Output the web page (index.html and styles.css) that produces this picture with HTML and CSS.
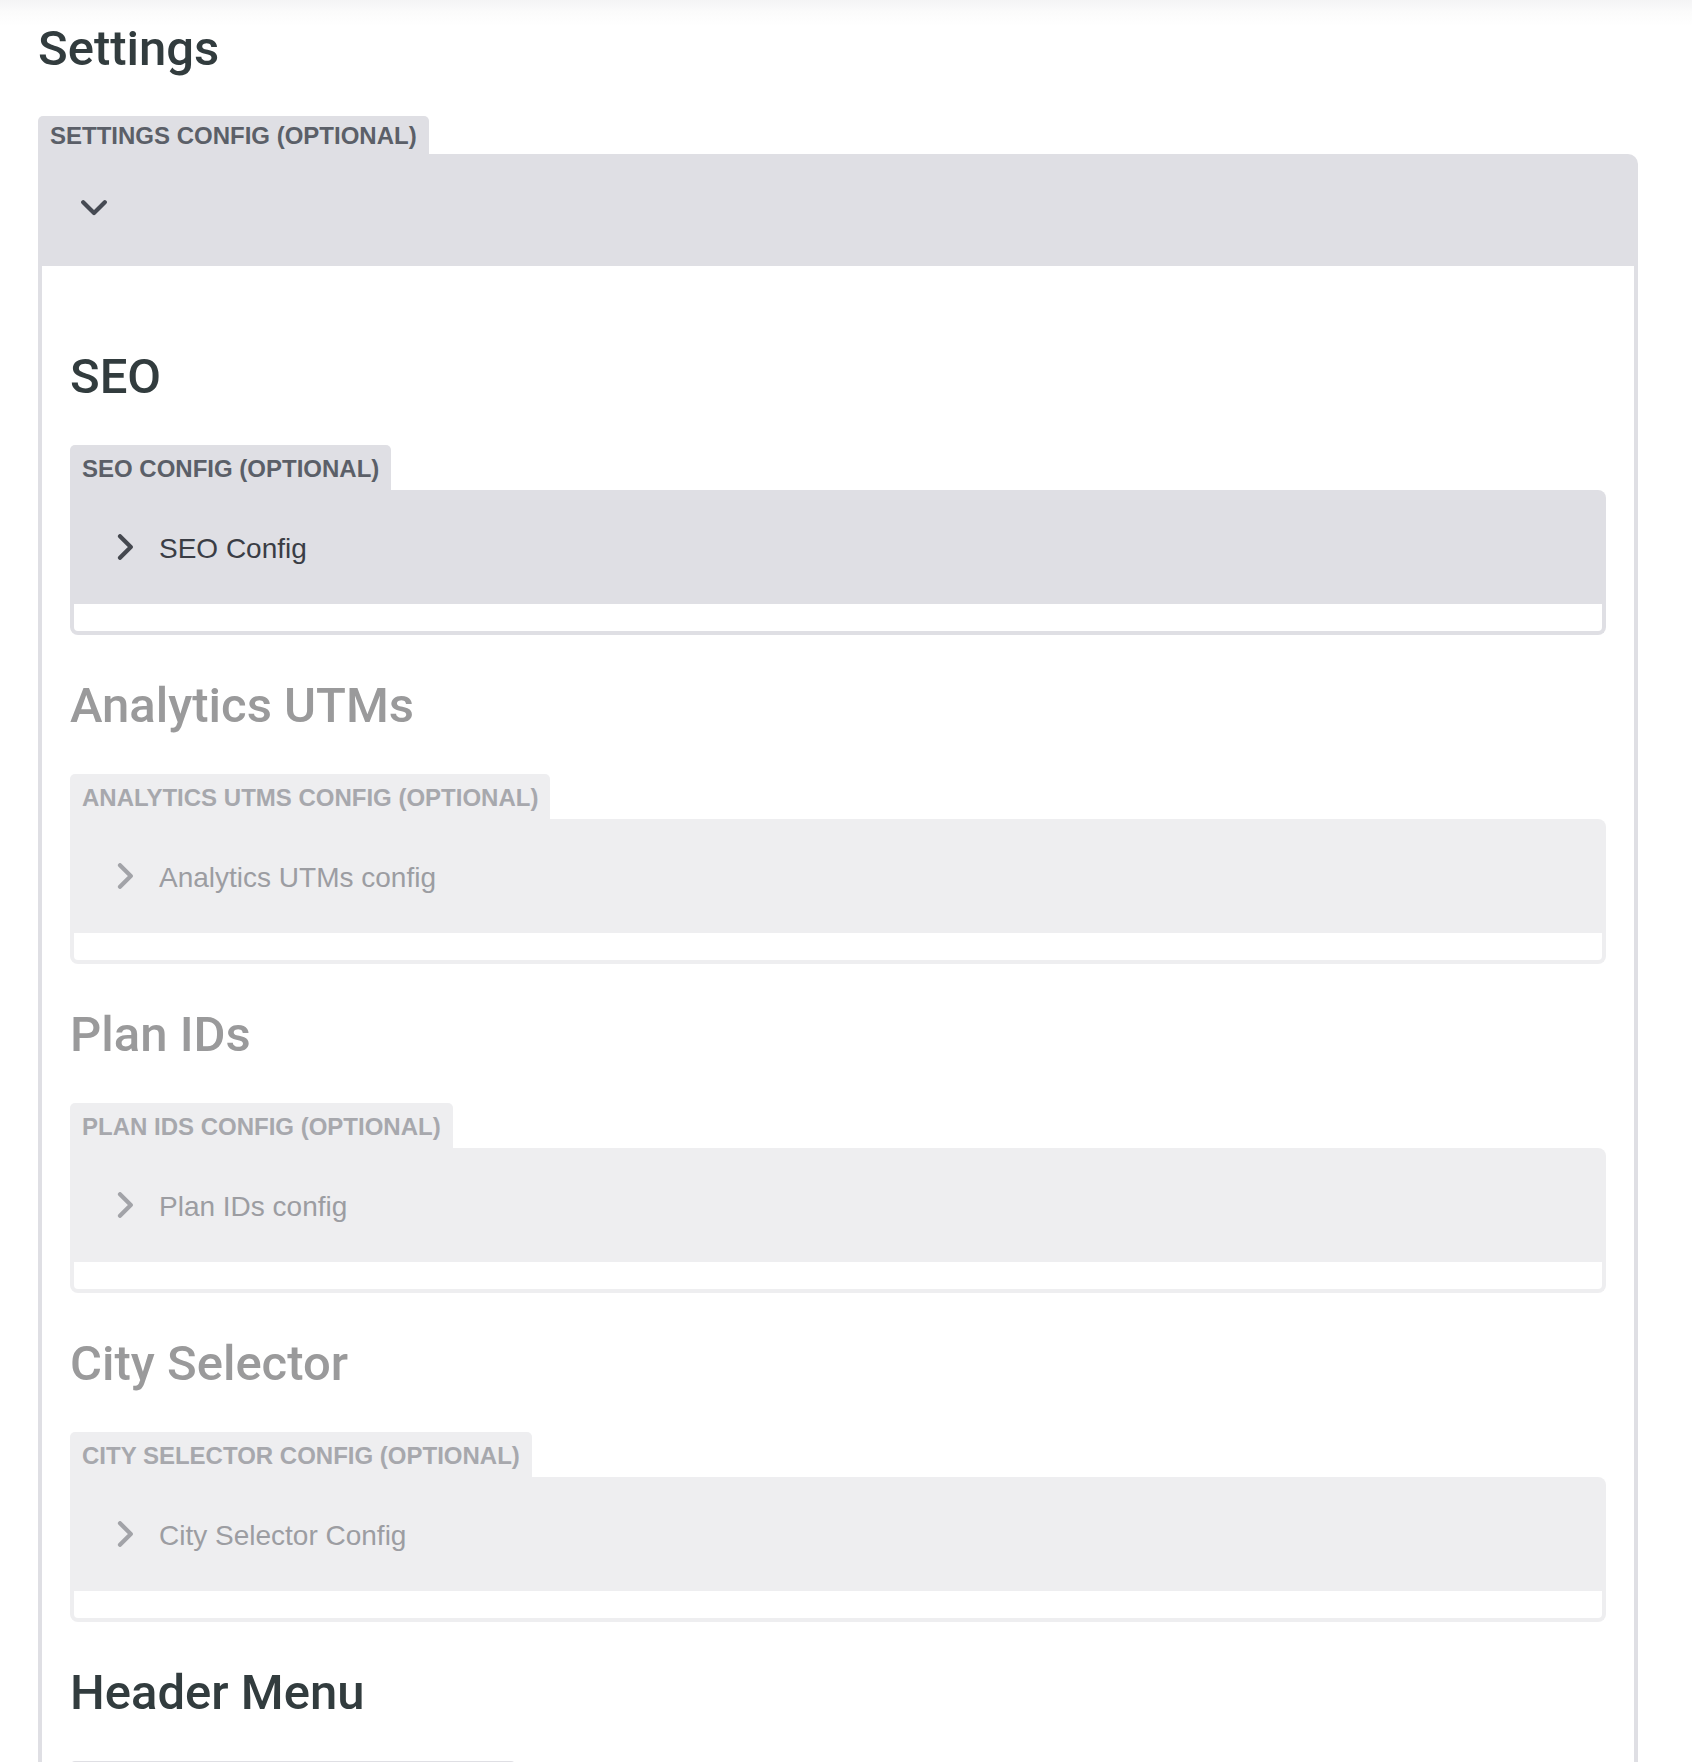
FILE: index.html
```html
<!DOCTYPE html>
<html lang="en">
<head>
<meta charset="utf-8">
<title>Settings</title>
<link rel="stylesheet" href="styles.css">
</head>
<body>
<div class="page">
  <h1 class="title">Settings</h1>
  <div class="group">
    <div class="group-tab">SETTINGS CONFIG (OPTIONAL)</div>
    <div class="group-band">
      <svg class="icon" viewBox="0 0 26 26" aria-hidden="true"><path d="M2.2 7.2 L13 18 L23.8 7.2" fill="none" stroke="currentColor" stroke-width="4.2" stroke-linecap="round" stroke-linejoin="round"/></svg>
    </div>
    <div class="group-body">

      <section class="section">
        <h2 class="section-title">SEO</h2>
        <div class="card">
          <div class="card-tab">SEO CONFIG (OPTIONAL)</div>
          <div class="card-band">
            <svg class="icon" viewBox="0 0 26 26" aria-hidden="true"><path d="M8 2.2 L18.8 13 L8 23.8" fill="none" stroke="currentColor" stroke-width="4.2" stroke-linecap="round" stroke-linejoin="round"/></svg>
            <span class="row-text">SEO Config</span>
          </div>
          <div class="card-strip"></div>
        </div>
      </section>

      <section class="section is-muted">
        <h2 class="section-title">Analytics UTMs</h2>
        <div class="card">
          <div class="card-tab">ANALYTICS UTMS CONFIG (OPTIONAL)</div>
          <div class="card-band">
            <svg class="icon" viewBox="0 0 26 26" aria-hidden="true"><path d="M8 2.2 L18.8 13 L8 23.8" fill="none" stroke="currentColor" stroke-width="4.2" stroke-linecap="round" stroke-linejoin="round"/></svg>
            <span class="row-text">Analytics UTMs config</span>
          </div>
          <div class="card-strip"></div>
        </div>
      </section>

      <section class="section is-muted">
        <h2 class="section-title">Plan IDs</h2>
        <div class="card">
          <div class="card-tab">PLAN IDS CONFIG (OPTIONAL)</div>
          <div class="card-band">
            <svg class="icon" viewBox="0 0 26 26" aria-hidden="true"><path d="M8 2.2 L18.8 13 L8 23.8" fill="none" stroke="currentColor" stroke-width="4.2" stroke-linecap="round" stroke-linejoin="round"/></svg>
            <span class="row-text">Plan IDs config</span>
          </div>
          <div class="card-strip"></div>
        </div>
      </section>

      <section class="section is-muted">
        <h2 class="section-title">City Selector</h2>
        <div class="card">
          <div class="card-tab">CITY SELECTOR CONFIG (OPTIONAL)</div>
          <div class="card-band">
            <svg class="icon" viewBox="0 0 26 26" aria-hidden="true"><path d="M8 2.2 L18.8 13 L8 23.8" fill="none" stroke="currentColor" stroke-width="4.2" stroke-linecap="round" stroke-linejoin="round"/></svg>
            <span class="row-text">City Selector Config</span>
          </div>
          <div class="card-strip"></div>
        </div>
      </section>

      <section class="section">
        <h2 class="section-title">Header Menu</h2>
        <div class="card">
          <div class="card-tab card-tab--folded" aria-label="HEADER MENU CONFIG (OPTIONAL)"></div>
        </div>
      </section>

    </div>
  </div>
</div>
</body>
</html>
```
FILE: styles.css
```css
* { box-sizing: border-box; }

html, body { margin: 0; padding: 0; background: #ffffff; }

.page {
  height: 1762px;
  overflow: hidden;
  padding: 20px 54px 0 38px;
  background: linear-gradient(#f4f4f5 0, #fbfbfb 12px, #ffffff 26px);
  font-family: "Liberation Sans", Arial, Helvetica, sans-serif;
}

.title {
  margin: 0 0 38px;
  font-family: Roboto, "Liberation Sans", sans-serif;
  font-weight: 500;
  font-size: 49px;
  line-height: 58px;
  color: #323c3e;
}

.group {
  display: flex;
  flex-direction: column;
}

.group-tab {
  align-self: flex-start;
  padding: 6px 12px 5px;
  font-weight: 700;
  font-size: 24px;
  line-height: 27px;
  color: #5b5f68;
  background: #dfdfe4;
  border-radius: 5px 5px 0 0;
}

.group-band {
  height: 112px;
  display: flex;
  align-items: center;
  padding: 0 0 4px 42.7px;
  background: #dfdfe4;
  border-top-right-radius: 10px;
  color: #464a53;
}

.group-body {
  border-left: 4px solid #dfdfe4;
  border-right: 4px solid #dfdfe4;
  padding: 82px 28px 0;
}

.icon {
  display: block;
  flex: none;
  width: 26px;
  height: 26px;
}

.section + .section { margin-top: 42px; }

.section-title {
  margin: 0 0 39px;
  font-family: Roboto, "Liberation Sans", sans-serif;
  font-weight: 500;
  font-size: 49px;
  line-height: 58px;
  color: #323c3e;
}

.card {
  display: flex;
  flex-direction: column;
}

.card-tab {
  align-self: flex-start;
  padding: 9.5px 12px 8.5px;
  font-weight: 700;
  font-size: 24px;
  line-height: 27px;
  color: #5b5f68;
  background: #dfdfe4;
  border-radius: 5px 5px 0 0;
}

.card-tab--folded {
  width: 446px;
  height: 45px;
}

.card-band {
  height: 114px;
  display: flex;
  align-items: center;
  padding-left: 42.3px;
  background: #dfdfe4;
  border-top-right-radius: 8px;
  color: #45484f;
}

.row-text {
  margin: 3px 0 0 20.7px;
  font-size: 28px;
  line-height: 32px;
  color: #3a3d45;
}

.card-strip {
  height: 31px;
  border: 4px solid #dfdfe4;
  border-top: 0;
  border-radius: 0 0 8px 8px;
  background: #ffffff;
}

/* muted (inactive) sections */
.is-muted .section-title { color: #9a9a9b; }
.is-muted .card-tab { background: #eeeef0; color: #a7a8ad; }
.is-muted .card-band { background: #eeeef0; color: #a2a3a8; }
.is-muted .row-text { color: #9c9da2; }
.is-muted .card-strip { border-color: #eeeef0; }
```
